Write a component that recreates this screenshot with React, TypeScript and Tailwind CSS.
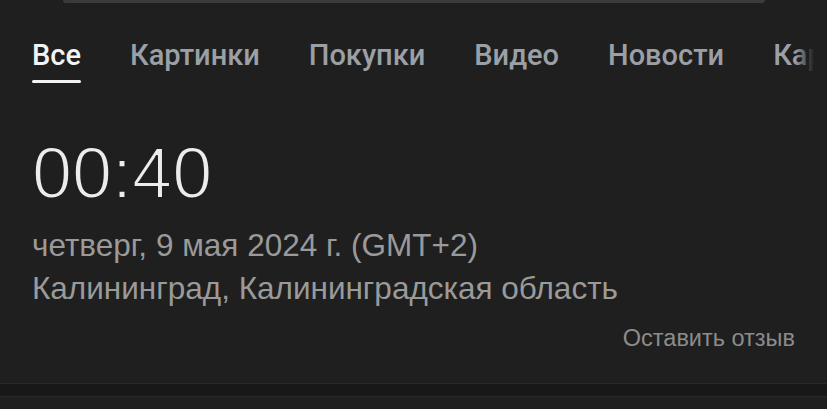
import React from "react";

const tabs = ["Все", "Картинки", "Покупки", "Видео", "Новости", "Карты"];

export default function App() {
  return (
    <div className="w-[827px] h-[409px] bg-[#1f1f1f] overflow-hidden flex flex-col">
      <div className="ml-[63px] w-[702px] h-[3px] bg-[#3b3b3b] rounded-b-full" />
      <div
        className="relative flex gap-[49px] pl-[32px] mt-[34px] whitespace-nowrap overflow-hidden"
        style={{ fontFamily: "Roboto, 'Noto Sans', sans-serif" }}
      >
        {tabs.map((t, i) => (
          <div key={t} className="flex flex-col items-stretch shrink-0">
            <span
              className={
                "text-[29px] leading-[36px] font-medium " +
                (i === 0 ? "text-[#f1f3f4]" : "text-[#9aa0a6]")
              }
            >
              {t}
            </span>
            {i === 0 ? (
              <div className="mt-[7px] h-[3px] bg-[#f1f3f4] rounded-full" />
            ) : null}
          </div>
        ))}
        <div className="absolute right-0 top-0 h-[36px] w-[32px] bg-gradient-to-r from-transparent via-[#1f1f1f] via-60% to-[#1f1f1f]" />
      </div>
      <div
        className="pl-[32px] mt-[54px] text-[#ececec] text-[72px] leading-[72px] [-webkit-text-stroke:2px_#1f1f1f]"
        style={{ fontFamily: "'Liberation Sans', Arial, sans-serif" }}
      >
        00:40
      </div>
      <div
        className="pl-[32px] mt-[15px] text-[#9a9a9a] text-[31.5px] leading-[43px]"
        style={{ fontFamily: "'Liberation Sans', Arial, sans-serif" }}
      >
        <div>четверг, 9 мая 2024 г. (GMT+2)</div>
        <div>Калининград, Калининградская область</div>
      </div>
      <div
        className="flex justify-end pr-[32px] mt-[14px] text-[#8c8c8c] text-[23.5px] leading-[28px]"
        style={{ fontFamily: "'Liberation Sans', Arial, sans-serif" }}
      >
        Оставить отзыв
      </div>
      <div className="flex-1" />
      <div className="h-px bg-[#292929]" />
      <div className="h-[12px] bg-[#181818]" />
      <div className="h-px bg-[#282828]" />
      <div className="h-[12px] bg-[#202020]" />
    </div>
  );
}
